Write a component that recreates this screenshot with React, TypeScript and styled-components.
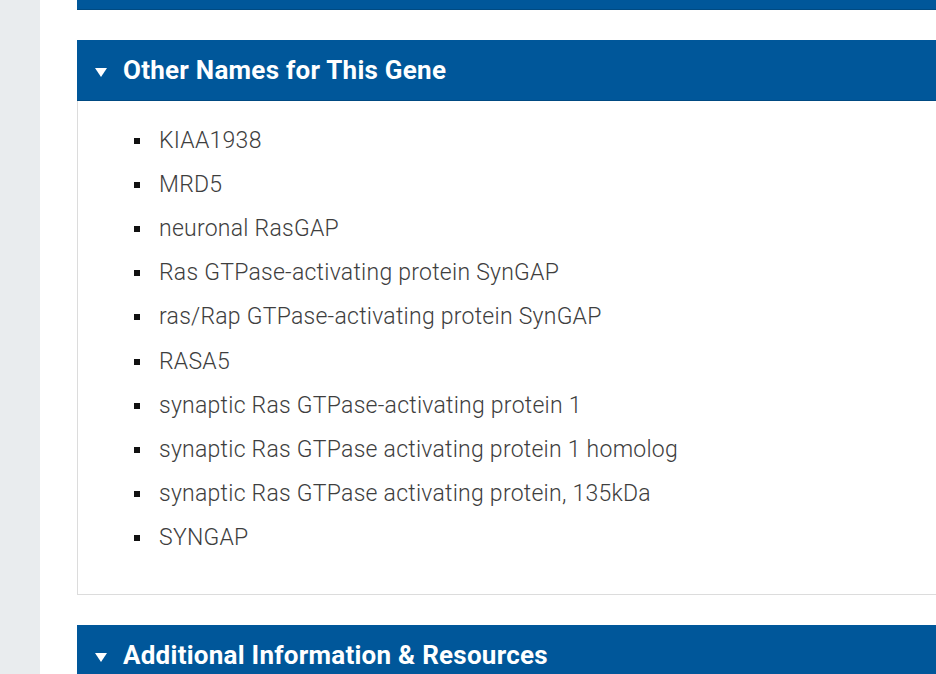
import React from "react";
import styled, { createGlobalStyle } from "styled-components";

const Global = createGlobalStyle`
  html, body { margin: 0; padding: 0; background: #fff; }
  body { font-family: Roboto, "Noto Sans", sans-serif; overflow: hidden; }
`;

const Page = styled.div`
  display: flex;
  width: 936px;
  height: 674px;
  overflow: hidden;
`;

const Sidebar = styled.div`
  width: 40px;
  flex: none;
  background: #e9ecee;
`;

const Main = styled.div`
  flex: 1;
  padding-left: 37px;
  display: flex;
  flex-direction: column;
  min-width: 0;
  & > * { flex: none; }
`;

const TopBar = styled.div`
  height: 9px;
  background: #00579a;
  border-bottom: 1px solid #004a82;
  margin-right: -20px;
`;

const Section = styled.section`
  margin-top: 30px;
  margin-right: -20px;
`;

const Header = styled.div`
  height: 61px;
  background: #00579a;
  border-bottom: 1px solid #004a82;
  box-sizing: border-box;
  display: flex;
  align-items: center;
  padding-left: 18px;
  gap: 16px;
  color: #fff;
  font-weight: 700;
  font-size: 26px;
  letter-spacing: 0.25px;
`;

const Caret = styled.svg`
  width: 12px;
  height: 9px;
  flex: none;
  margin-top: 5px;
`;

const Title = styled.h2`
  margin: 0;
  font: inherit;
`;

const Body = styled.div`
  border: 1px solid #dcdcdc;
  border-top: none;
  padding: 17px 0 34px 56px;
`;

const List = styled.ul`
  list-style: none;
  margin: 0;
  padding: 0;
`;

const Item = styled.li`
  display: flex;
  align-items: center;
  height: 44.2px;
  font-size: 23px;
  font-weight: 300;
  letter-spacing: 0.25px;
  color: #3e3e3e;
  &::before {
    content: "";
    width: 6px;
    height: 6px;
    background: #111;
    margin-right: 19px;
    margin-top: 1px;
    flex: none;
  }
`;

const names = [
  "KIAA1938",
  "MRD5",
  "neuronal RasGAP",
  "Ras GTPase-activating protein SynGAP",
  "ras/Rap GTPase-activating protein SynGAP",
  "RASA5",
  "synaptic Ras GTPase-activating protein 1",
  "synaptic Ras GTPase activating protein 1 homolog",
  "synaptic Ras GTPase activating protein, 135kDa",
  "SYNGAP",
];

const Arrow = () => (
  <Caret viewBox="0 0 12 9">
    <polygon points="0,0 12,0 6,9" fill="#fff" />
  </Caret>
);

export default function App() {
  return (
    <>
      <Global />
      <Page>
        <Sidebar />
        <Main>
          <TopBar />
          <Section>
            <Header>
              <Arrow />
              <Title>Other Names for This Gene</Title>
            </Header>
            <Body>
              <List>
                {names.map((n) => (
                  <Item key={n}>{n}</Item>
                ))}
              </List>
            </Body>
          </Section>
          <Section>
            <Header>
              <Arrow />
              <Title>Additional Information &amp; Resources</Title>
            </Header>
          </Section>
        </Main>
      </Page>
    </>
  );
}
